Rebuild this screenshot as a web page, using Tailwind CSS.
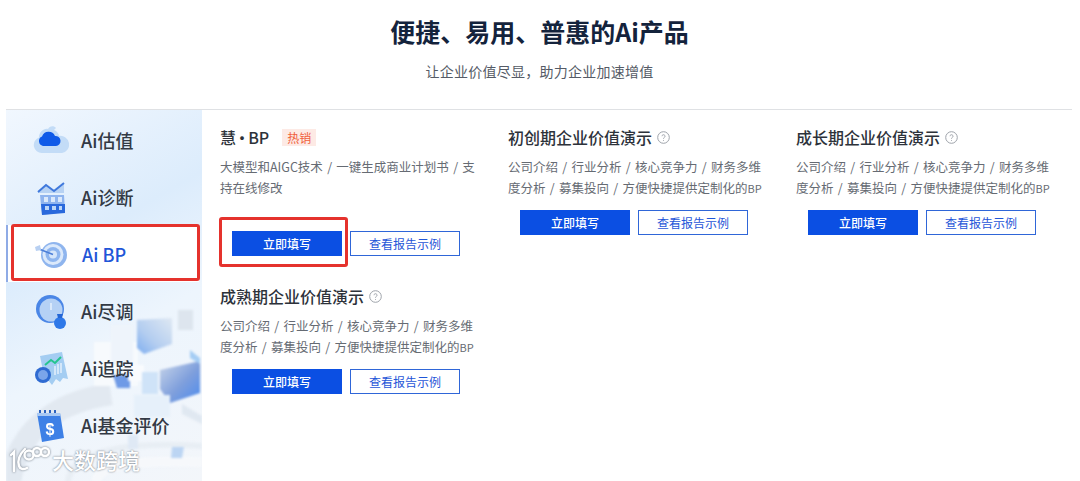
<!DOCTYPE html>
<html lang="zh-CN">
<head>
    <meta charset="UTF-8">
    <title>便捷、易用、普惠的Ai产品</title>
    <script src="https://cdn.jsdelivr.net/npm/@tailwindcss/browser@4"></script>
</head>
<body class="bg-white font-['Noto_Sans_CJK_SC','Noto_Sans',sans-serif] overflow-hidden">
    <div class="w-[1080px] h-[481px] overflow-hidden">
        <!-- header -->
        <div class="h-[109px] text-center pr-[1px]">
            <h1 class="pt-[13px] text-[25px] leading-[36px] font-semibold text-[#14233c]">便捷、易用、普惠的Ai产品</h1>
            <p class="mt-[12px] text-[14px] leading-[20px] tracking-[0.25px] text-[#555b66]">让企业价值尽显，助力企业加速增值</p>
        </div>

        <div class="mx-[6px] w-[1066px] border-t border-[#dfe1e4] flex h-[372px]">
            <!-- sidebar -->
            <div class="relative w-[196px] h-full overflow-hidden pt-[1px] bg-[linear-gradient(150deg,#f1f7fe_0%,#dcecfc_36%,#edf5fd_60%,#f3f6fa_100%)]">
                <svg class="absolute left-0 top-0 blur-[1px]" width="196" height="372" viewBox="0 0 196 372" fill="none">
                    <defs>
                        <linearGradient id="cube1" x1="1" y1="0" x2="0" y2="1"><stop offset="0" stop-color="#dfe8f3"/><stop offset="0.6" stop-color="#b3cdf0"/><stop offset="1" stop-color="#7eaef0"/></linearGradient>
                        <linearGradient id="cube2" x1="0" y1="0" x2="1" y2="1"><stop offset="0" stop-color="#c9d6ea"/><stop offset="0.55" stop-color="#7f9fdc"/><stop offset="1" stop-color="#4c8bee"/></linearGradient>
                    </defs>
                    <path d="M4 372 C12 320 50 292 105 284" stroke="#e2e9f1" stroke-width="22"/>
                    <path d="M62 372 C64 345 110 330 196 336" stroke="#e8eef4" stroke-width="6"/>
                    <path d="M90 372 C92 355 130 350 196 352" stroke="#f6f8fb" stroke-width="10"/>
                    <path d="M88 232h44v44H88z" fill="#f7fafd"/>
                    <path d="M105 215h22v40h-22z" fill="#eef4fb"/>
                    <path d="M131 210l35 -2 v26l-28 10 -7 -6z" fill="url(#cube1)"/>
                    <path d="M172 200h15v20h-15z" fill="#dde5ee"/>
                    <path d="M154 260l40 -9v32l-30 10 -10 -14z" fill="url(#cube2)"/>
                    <path d="M184 240l10 8v6l-10 -6z" fill="#a5cdf4"/>
                    <path d="M107 265h17v13h-13z" fill="#6f9ae6"/>
                    <path d="M122 255h16v16h-16z" fill="#f9fbfe"/>
                    <path d="M136 262h16v22h-16z" fill="#cfe3f8"/>
                    <path d="M128 285h36v22h-36z" fill="#e6f0fa"/>
                    <path d="M122 325h10v14h-10z" fill="#dfe9f5"/>
                    <path d="M166 337h12l-2 11h-11z" fill="#bcd5f3"/>
                    <path d="M176 294l20 12v8l-20 -10z" fill="#e0e8f1"/>
                </svg>

                <ul class="relative flex flex-col">
                    <li class="h-[57px] pt-[2px] pl-[27px] flex items-center gap-[12px] text-[18px] font-medium text-[#333a45]">
                        <svg class="blur-[0.4px]" width="36" height="36" viewBox="0 0 36 36"><path d="M9 30a8 8 0 0 1-3-15.500C6 9 11 5 15 6c1-3 6-4 8 -1l-2 2c3 1 5 4 5 6 a8.500 8.500 0 0 1 3 17z" fill="#c3dcf7"/><path d="M10 23a5 5 0 0 1-1-9.500A7 7 0 0 1 22 13a5 5 0 0 1 1 10z" fill="#0f5ae8"/></svg>
                        <span>Ai估值</span>
                    </li>
                    <li class="h-[57px] pt-[2px] pl-[27px] flex items-center gap-[12px] text-[18px] font-medium text-[#333a45]">
                        <svg class="blur-[0.4px]" width="36" height="36" viewBox="0 0 36 36"><path d="M7 15h24l1 17-23 3z" fill="#8fb4ee"/><path d="M5 12l8 -7 8 6 10 -8v10H5z" fill="#b7d2f3"/><path d="M5 12l8 -7 8 6 10 -8" fill="none" stroke="#3f78dc" stroke-width="2"/><path d="M11 17h4v5h-4zm7 0h4v5h-4zm7 0h4v5h-4z" fill="#dbe9fb"/><path d="M8 24h24v9l-23 2z" fill="#2a69dc"/><path d="M12 26h4v4h-4zm7 0h4v4h-4zm7 0h3v4h-3z" fill="#bcd6f7"/></svg>
                        <span>Ai诊断</span>
                    </li>
                    <li class="relative h-[57px] pt-[2px] pl-[27px] flex items-center gap-[13px] bg-white text-[18px] font-medium text-[#1f56d8] mr-[3px]">
                        <span class="absolute left-0 top-0 bottom-0 w-[2px] bg-[#8fabe6]"></span>
                        <svg class="blur-[0.4px]" width="36" height="36" viewBox="0 0 36 36"><circle cx="21" cy="18" r="13" fill="#8fb5ee"/><circle cx="20" cy="17.500" r="10.500" fill="#dbe9fb"/><circle cx="20" cy="17.500" r="7.500" fill="#8eb5ef"/><circle cx="20" cy="17.500" r="4" fill="#d5e5fa"/><path d="M6 12l14 5.500" stroke="#4c7fd8" stroke-width="1.500"/><path d="M2 10l5 -2 1 5 -5 1z" fill="#b8d0f2"/></svg>
                        <span>Ai BP</span>
                    </li>
                    <li class="h-[57px] pt-[2px] pl-[27px] flex items-center gap-[12px] text-[18px] font-medium text-[#333a45]">
                        <svg class="blur-[0.4px]" width="36" height="36" viewBox="0 0 36 36"><circle cx="17" cy="15" r="14" fill="#4a86e6"/><circle cx="18" cy="16" r="11.500" fill="#b5d1f5"/><path d="M18 9v7" stroke="#e7f0fc" stroke-width="1.500" fill="none"/><circle cx="27" cy="29" r="6" fill="#2e78e8"/><path d="M24 20l6 0 -1 4h-4z" fill="#2466d6"/></svg>
                        <span>Ai尽调</span>
                    </li>
                    <li class="h-[57px] pt-[2px] pl-[27px] flex items-center gap-[12px] text-[18px] font-medium text-[#333a45]">
                        <svg class="blur-[0.4px]" width="36" height="38" viewBox="0 0 36 38"><path d="M7 6l22 -4 6 27 -5 -1 -3 4 -4 -3 -4 6 -4 -5 -3 1z" fill="#a4cdf2"/><path d="M12 15l6 -5 4 3 6 -6" fill="none" stroke="#25c58f" stroke-width="2"/><path d="M22 25V16m3 8V14m3 9V13" stroke="#e4f0fc" stroke-width="1.500"/><circle cx="10" cy="25" r="8" fill="#2f6bd2"/><circle cx="10" cy="25" r="5" fill="#7ba5ea"/></svg>
                        <span>Ai追踪</span>
                    </li>
                    <li class="h-[57px] pt-[2px] pl-[27px] flex items-center gap-[12px] text-[18px] font-medium text-[#333a45]">
                        <svg class="blur-[0.4px]" width="36" height="36" viewBox="0 0 36 36"><path d="M4 5h23l4 25-22 4z" fill="#3d80e6"/><path d="M7 5v-3m5 3v-3m5 3v-3m5 3v-3" stroke="#2c62be" stroke-width="2"/><path d="M4 5h23l.5 3H4z" fill="#a8c8f3"/><text x="17" y="27" text-anchor="middle" font-size="16" font-weight="700" fill="#fff" font-family="Liberation Sans">$</text></svg>
                        <span>Ai基金评价</span>
                    </li>
                </ul>

                <!-- watermark -->
                <div class="absolute left-[4px] top-[335px] flex items-center gap-[2px]">
                    <svg class="drop-shadow-[0_0_1px_#6f7985]" width="40" height="28" viewBox="0 0 40 28" fill="none" stroke="#fff" stroke-width="2.400" stroke-linecap="round"><path d="M1 10l3 -3v19"/><path d="M15 4C9 10 7 15 9 21c1 3 4 4 8 2"/><circle cx="19" cy="10" r="4.500"/><circle cx="27" cy="7" r="4"/><circle cx="35" cy="7" r="4"/></svg>
                    <span class="text-[22px] leading-[28px] font-medium text-white [text-shadow:0_0_2px_#5f6975]">大数跨境</span>
                </div>
            </div>

            <!-- products -->
            <div class="relative flex-1 pl-[18px] pt-[16px]">
                <div class="grid grid-cols-[288px_288px_252px] grid-rows-[159px_auto]">
                    <div class="w-[252px]">
                        <div class="flex items-center h-[22px]">
                            <h3 class="text-[16px] leading-[22px] font-medium text-[#2d323a] [word-spacing:-5.5px]">慧 · BP</h3>
                            <span class="ml-[13px] px-[5px] h-[17px] leading-[17px] text-[12px] text-[#f0603c] bg-[#fdeae5]">热销</span>
                        </div>
                        <p class="mt-[8px] text-[12.5px] leading-[21px] text-[#666b73] whitespace-nowrap [word-spacing:1.5px]">大模型和AIGC技术 / 一键生成商业计划书 / 支<br>持在线修改</p>
                        <div class="mt-[33px] flex justify-center gap-[8px]">
                            <button class="w-[110px] h-[25px] bg-[#0b4fe3] text-white text-[12px] font-medium">立即填写</button>
                            <button class="w-[110px] h-[25px] bg-white border border-[#2f66d8] text-[#1f56d8] text-[12px]">查看报告示例</button>
                        </div>
                    </div>
                    <div class="w-[252px]">
                        <div class="flex items-center h-[22px]">
                            <h3 class="text-[16px] leading-[22px] font-medium text-[#2d323a]">初创期企业价值演示</h3>
                            <svg class="ml-[5px]" width="13" height="13" viewBox="0 0 13 13" fill="none" stroke="#9ea3aa"><circle cx="6.500" cy="6.500" r="5.800"/><path d="M5 5.200a1.500 1.500 0 1 1 2.300 1.300c-.6.400-.8.700-.8 1.200M6.500 9v.8"/></svg>
                        </div>
                        <p class="mt-[8px] text-[12.5px] leading-[21px] text-[#666b73] whitespace-nowrap [word-spacing:1.5px]">公司介绍 / 行业分析 / 核心竞争力 / 财务多维<br>度分析 / 募集投向 / 方便快捷提供定制化的<span class="text-[11px]">BP</span></p>
                        <div class="mt-[11px] flex justify-center gap-[8px]">
                            <button class="w-[110px] h-[25px] bg-[#0b4fe3] text-white text-[12px] font-medium">立即填写</button>
                            <button class="w-[110px] h-[25px] bg-white border border-[#2f66d8] text-[#1f56d8] text-[12px]">查看报告示例</button>
                        </div>
                    </div>
                    <div class="w-[252px]">
                        <div class="flex items-center h-[22px]">
                            <h3 class="text-[16px] leading-[22px] font-medium text-[#2d323a]">成长期企业价值演示</h3>
                            <svg class="ml-[5px]" width="13" height="13" viewBox="0 0 13 13" fill="none" stroke="#9ea3aa"><circle cx="6.500" cy="6.500" r="5.800"/><path d="M5 5.200a1.500 1.500 0 1 1 2.300 1.300c-.6.400-.8.700-.8 1.200M6.500 9v.8"/></svg>
                        </div>
                        <p class="mt-[8px] text-[12.5px] leading-[21px] text-[#666b73] whitespace-nowrap [word-spacing:1.5px]">公司介绍 / 行业分析 / 核心竞争力 / 财务多维<br>度分析 / 募集投向 / 方便快捷提供定制化的<span class="text-[11px]">BP</span></p>
                        <div class="mt-[11px] flex justify-center gap-[8px]">
                            <button class="w-[110px] h-[25px] bg-[#0b4fe3] text-white text-[12px] font-medium">立即填写</button>
                            <button class="w-[110px] h-[25px] bg-white border border-[#2f66d8] text-[#1f56d8] text-[12px]">查看报告示例</button>
                        </div>
                    </div>
                    <div class="w-[252px]">
                        <div class="flex items-center h-[22px]">
                            <h3 class="text-[16px] leading-[22px] font-medium text-[#2d323a]">成熟期企业价值演示</h3>
                            <svg class="ml-[5px]" width="13" height="13" viewBox="0 0 13 13" fill="none" stroke="#9ea3aa"><circle cx="6.500" cy="6.500" r="5.800"/><path d="M5 5.200a1.500 1.500 0 1 1 2.300 1.300c-.6.400-.8.700-.8 1.200M6.500 9v.8"/></svg>
                        </div>
                        <p class="mt-[8px] text-[12.5px] leading-[21px] text-[#666b73] whitespace-nowrap [word-spacing:1.5px]">公司介绍 / 行业分析 / 核心竞争力 / 财务多维<br>度分析 / 募集投向 / 方便快捷提供定制化的<span class="text-[11px]">BP</span></p>
                        <div class="mt-[11px] flex justify-center gap-[8px]">
                            <button class="w-[110px] h-[25px] bg-[#0b4fe3] text-white text-[12px] font-medium">立即填写</button>
                            <button class="w-[110px] h-[25px] bg-white border border-[#2f66d8] text-[#1f56d8] text-[12px]">查看报告示例</button>
                        </div>
                    </div>
                </div>
            </div>
        </div>

        <!-- red annotation boxes drawn over the screenshot -->
        <div class="absolute left-[11px] top-[224px] w-[189px] h-[57px] border-[3px] border-[#e5322d] rounded-[3px]"></div>
        <div class="absolute left-[219px] top-[217px] w-[129px] h-[50px] border-[3px] border-[#e5322d] rounded-[3px]"></div>
    </div>
</body>
</html>
